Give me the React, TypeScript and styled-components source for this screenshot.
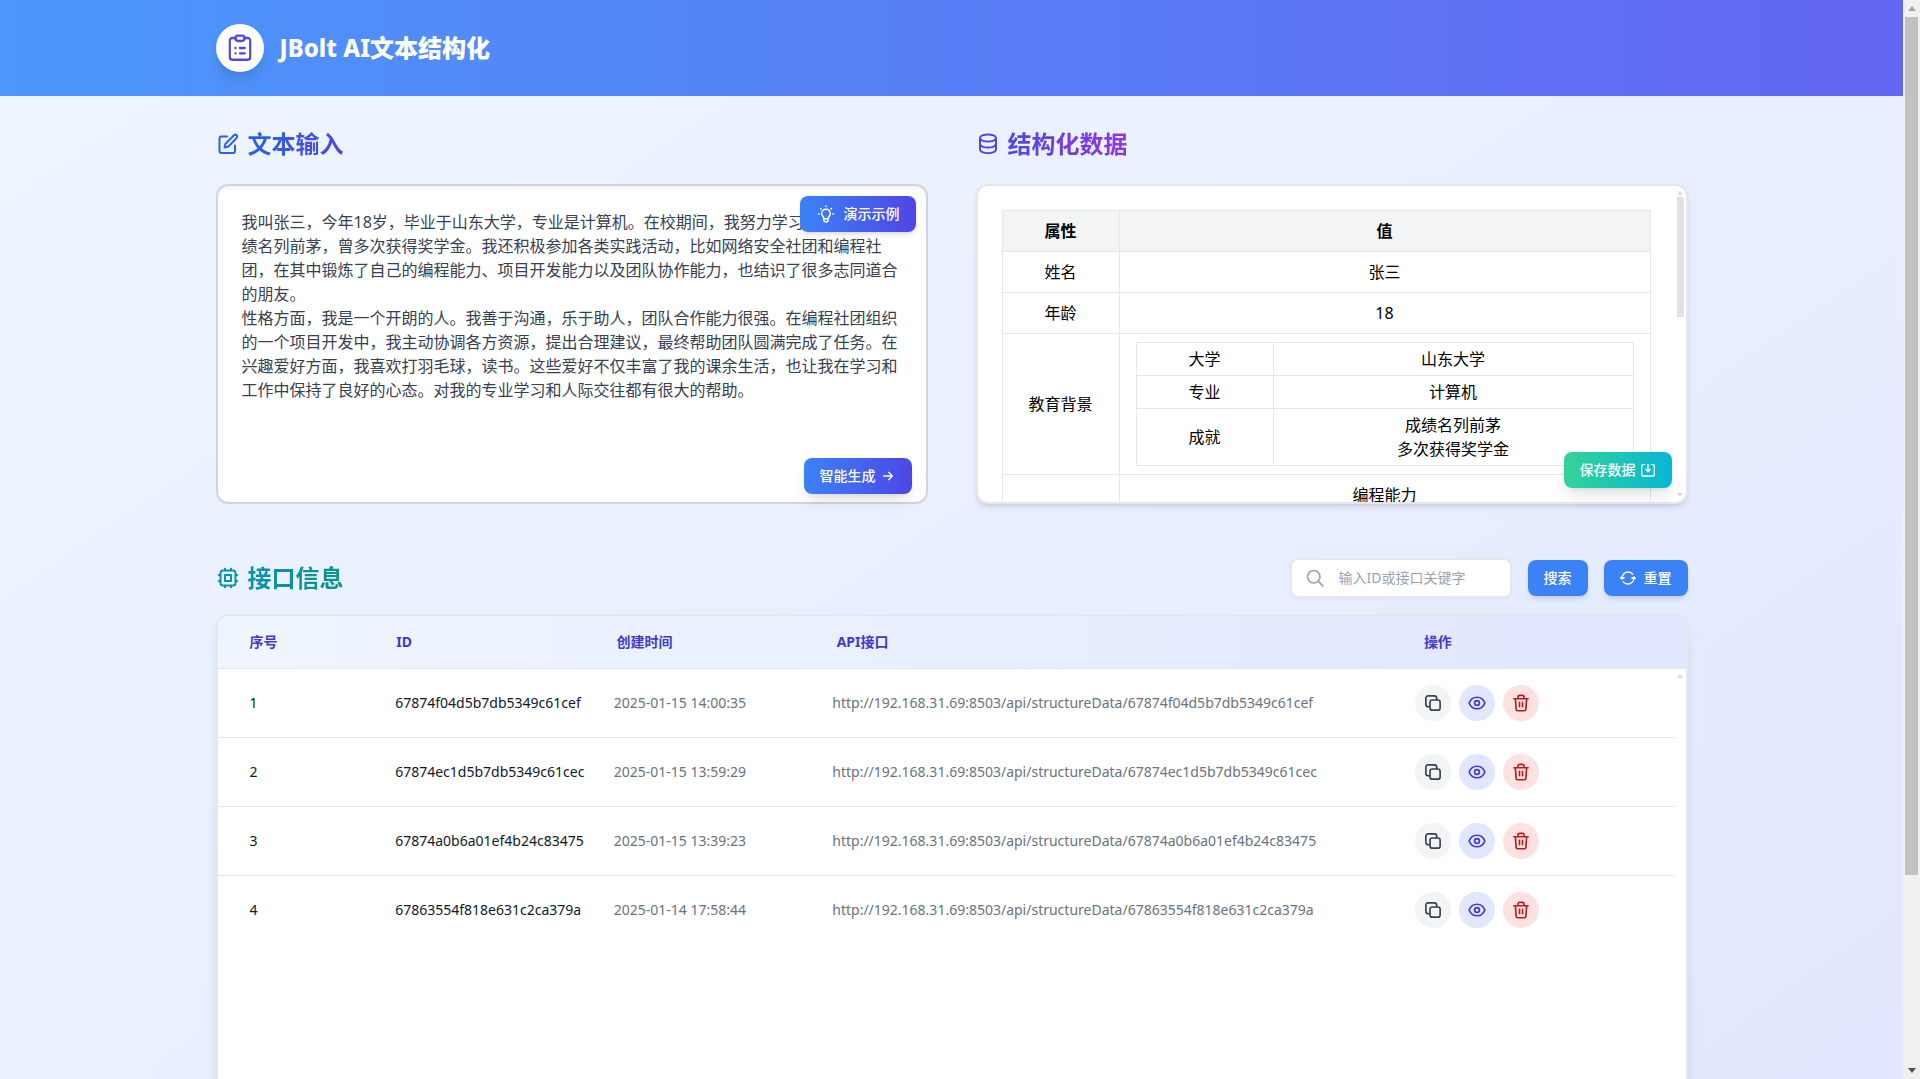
import React, { useState } from "react";
import styled, { createGlobalStyle, css } from "styled-components";

const GlobalStyle = createGlobalStyle`
  *, *::before, *::after { box-sizing: border-box; }
  body {
    margin: 0;
    color: #000;
    font-family: "Noto Sans", "Noto Sans CJK SC", sans-serif;
    font-size: 16px;
    line-height: 24px;
  }
  h1, h2 { margin: 0; }
  button, input, textarea { font: inherit; }
  button { border: 0; cursor: pointer; }
`;

const Shell = styled.div`
  display: flex;
  height: 100vh;
  overflow: hidden;
`;

const Viewport = styled.div`
  flex: 1;
  min-width: 0;
  overflow-y: auto;
  scrollbar-width: none;
`;

const Page = styled.div`
  background: linear-gradient(to bottom right, #eff6ff, #e0e7ff);
`;

const Header = styled.header`
  background: linear-gradient(to right, #4b97fb, #6366f1);
`;

const Container = styled.div`
  max-width: 1536px;
  margin: 0 auto;
  padding: 0 32px;
`;

const Brand = styled(Container)`
  display: flex;
  align-items: center;
  gap: 16px;
  height: 96px;
`;

const Logo = styled.span`
  display: grid;
  place-items: center;
  width: 48px;
  height: 48px;
  border-radius: 50%;
  background: #fff;
  color: #4f46e5;
  box-shadow: 0 10px 15px -3px rgba(0, 0, 0, 0.1), 0 4px 6px -4px rgba(0, 0, 0, 0.1);
`;

const BrandName = styled.h1`
  color: #fff;
  font-size: 24px;
  line-height: 32px;
  font-weight: 800;
`;

const Main = styled(Container).attrs({ as: "main" })`
  display: flex;
  flex-direction: column;
  gap: 54px;
  padding-top: 32px;
  padding-bottom: 48px;
`;

const Columns = styled.div`
  display: grid;
  grid-template-columns: 1fr 1fr;
  gap: 48px;
`;

const Column = styled.section`
  display: flex;
  flex-direction: column;
  gap: 24px;
  min-width: 0;
`;

const Heading = styled.div<{ $tone: string }>`
  display: flex;
  align-items: center;
  gap: 8px;
  height: 32px;
  color: ${(p) => p.$tone};
`;

const HeadingText = styled.h2<{ $from: string; $to: string }>`
  font-size: 24px;
  line-height: 32px;
  font-weight: 700;
  color: transparent;
  background: linear-gradient(to right, ${(p) => p.$from}, ${(p) => p.$to});
  background-clip: text;
  -webkit-background-clip: text;
`;

const Panel = styled.div`
  position: relative;
  height: 320px;
`;

const TextBox = styled.textarea`
  display: block;
  width: 100%;
  height: 100%;
  padding: 24px;
  border: 2px solid #d1d5db;
  border-radius: 12px;
  background: #fff;
  color: #374151;
  resize: none;
  outline: none;
  overflow: hidden;
  scrollbar-width: none;
  line-height: 24px;
  box-shadow: inset 0 2px 4px rgba(0, 0, 0, 0.05);
`;

const solid = css`
  display: inline-flex;
  align-items: center;
  justify-content: center;
  height: 36px;
  padding: 0 16px;
  border-radius: 8px;
  color: #fff;
  font-size: 14px;
  line-height: 20px;
  font-weight: 500;
  white-space: nowrap;
`;

const FloatButton = styled.button<{ $from: string; $to: string }>`
  ${solid}
  position: absolute;
  background: linear-gradient(to right, ${(p) => p.$from}, ${(p) => p.$to});
`;

const ExampleButton = styled(FloatButton)`
  gap: 8px;
  top: 12px;
  right: 12px;
  box-shadow: 0 4px 6px -1px rgba(0, 0, 0, 0.1), 0 2px 4px -2px rgba(0, 0, 0, 0.1);
`;

const ActionButton = styled(FloatButton)<{ $bottom: number }>`
  gap: 4px;
  right: 16px;
  bottom: ${(p) => p.$bottom}px;
  box-shadow: 0 10px 15px -3px rgba(0, 0, 0, 0.1), 0 4px 6px -4px rgba(0, 0, 0, 0.1);
`;

const DataCard = styled.div`
  display: flex;
  height: 100%;
  border: 2px solid #e5e7eb;
  border-radius: 12px;
  background: #fff;
  overflow: hidden;
  box-shadow: 0 4px 6px -1px rgba(0, 0, 0, 0.1), 0 2px 4px -2px rgba(0, 0, 0, 0.1);
`;

const DataScroll = styled.div`
  flex: 1;
  min-width: 0;
  padding: 24px;
  overflow-y: auto;
  scrollbar-width: none;
`;

const Attributes = styled.table`
  width: 100%;
  border-collapse: collapse;
  table-layout: fixed;
  text-align: center;

  th, td { border: 1px solid #e5e7eb; padding: 8px 16px; }
  thead th { background: #f3f4f6; font-weight: 700; }
  tbody th { font-weight: 400; }
`;

const Nested = styled.table`
  width: 100%;
  border-collapse: collapse;
  table-layout: fixed;

  && th, && td { padding: 4px 16px; }
`;

const NameCol = styled.col<{ $w: number }>`
  width: ${(p) => p.$w}px;
`;

const SlimBar = styled.div`
  display: flex;
  flex-direction: column;
  align-items: center;
  width: 11px;
  padding: 5px 2px;
  color: #d9dbe0;
`;

const SlimThumb = styled.div`
  width: 7px;
  height: 120px;
  margin-top: 2px;
  margin-bottom: auto;
  background: #e1e2e6;
`;

const Toolbar = styled.div`
  display: flex;
  align-items: center;
  justify-content: space-between;
  height: 40px;
`;

const SearchForm = styled.form`
  display: flex;
  align-items: center;
  gap: 16px;
`;

const SearchField = styled.label`
  display: flex;
  align-items: center;
  gap: 14px;
  width: 222px;
  height: 40px;
  padding: 0 12px 0 13px;
  border: 2px solid #e5e7eb;
  border-radius: 8px;
  background: #fff;
  color: #9ca3af;
  box-shadow: 0 1px 2px rgba(0, 0, 0, 0.05);
`;

const SearchInput = styled.input`
  flex: 1;
  min-width: 0;
  padding: 0;
  border: 0;
  outline: none;
  background: transparent;
  font-size: 14px;
  line-height: 20px;
  color: #374151;
  &::placeholder { color: #9ca3af; opacity: 1; }
`;

const PlainButton = styled.button`
  ${solid}
  gap: 8px;
  background: #3b82f6;
  box-shadow: 0 4px 6px -1px rgba(0, 0, 0, 0.1), 0 2px 4px -2px rgba(0, 0, 0, 0.1);
`;

const ApiSection = styled.section`
  display: flex;
  flex-direction: column;
  gap: 16px;
`;

const ApiCard = styled.div`
  display: flex;
  flex-direction: column;
  height: 652px;
  border: 2px solid #e5e7eb;
  border-radius: 12px;
  background: #fff;
  overflow: hidden;
  box-shadow: 0 10px 15px -3px rgba(0, 0, 0, 0.1), 0 4px 6px -4px rgba(0, 0, 0, 0.1);
`;

const ApiTable = styled.table`
  width: 100%;
  border-collapse: collapse;
  table-layout: fixed;
  font-size: 14px;
  line-height: 20px;
  text-align: left;
`;

const HeadTable = styled(ApiTable)`
  background: linear-gradient(to right, #eff6ff, #e0e7ff);
  color: #4338ca;

  th { height: 52px; padding: 0 32px; font-weight: 700; border-bottom: 1px solid #e5e7eb; }
`;

const Body = styled.div`
  display: flex;
  flex: 1;
  min-height: 0;
`;

const BodyTable = styled(ApiTable)`
  flex: 1;
  align-self: flex-start;
`;

const Row = styled.tr`
  border-bottom: 1px solid #e5e7eb;
  &:last-child { border-bottom: 0; }
`;

const Cell = styled.td<{ $muted?: boolean }>`
  height: 69px;
  padding: 0 0 0 32px;
  white-space: nowrap;
  color: ${(p) => (p.$muted ? "#6b7280" : "#111827")};
`;

const ShareCol = styled.col<{ $share: number }>`
  width: ${(p) => p.$share}%;
`;

const Actions = styled.div`
  display: flex;
  gap: 8px;
`;

const RoundButton = styled.button<{ $bg: string; $fg: string }>`
  display: grid;
  place-items: center;
  width: 36px;
  height: 36px;
  padding: 0;
  border-radius: 50%;
  background: ${(p) => p.$bg};
  color: ${(p) => p.$fg};
`;

const PageBar = styled.div`
  display: flex;
  flex-direction: column;
  align-items: center;
  justify-content: space-between;
  width: 17px;
  padding: 0 2px;
  background: #f0f0f0;
`;

const PageThumb = styled.div`
  flex: 1;
  width: 13px;
  background: #c1c1c1;
`;

const PageRest = styled.div`
  height: 187px;
`;

const ArrowBox = styled.span<{ $fg: string }>`
  display: grid;
  place-items: center;
  height: 17px;
  color: ${(p) => p.$fg};
`;

type IconProps = { size?: number; width?: number; children: React.ReactNode };

const Icon = ({ size = 20, width = 2, children }: IconProps) => (
  <svg
    width={size}
    height={size}
    viewBox="0 0 24 24"
    fill="none"
    stroke="currentColor"
    strokeWidth={width}
    strokeLinecap="round"
    strokeLinejoin="round"
    aria-hidden="true"
  >
    {children}
  </svg>
);

const ClipboardIcon = () => (
  <Icon size={32} width={1.8}>
    <path d="M8.5 4.500H5.500A2 2 0 0 0 3.500 6.500V18.800a2 2 0 0 0 2 2h13a2 2 0 0 0 2-2V6.500a2 2 0 0 0-2-2h-3" transform="translate(1.2 0) scale(.9 1)" />
    <rect x="8.500" y="2.700" width="7" height="4" rx="2" />
    <path d="M8.600 12h.01M12 12h3.500M8.600 16h.01M12 16h3.500" />
  </Icon>
);

const EditIcon = () => (
  <Icon size={24} width={2}>
    <path d="M11 4.500H5.500a2 2 0 0 0-2 2v12.500a2 2 0 0 0 2 2H17a2 2 0 0 0 2-2V13.500" />
    <path d="M18 3.300a1.800 1.800 0 0 1 2.700 2.600L12.500 14.500 8.500 15.500 9.500 11.800z" />
  </Icon>
);

const DatabaseIcon = () => (
  <Icon size={24} width={2}>
    <ellipse cx="12" cy="6" rx="8" ry="3.600" />
    <path d="M4 6v11.600c0 2 3.600 3.600 8 3.600s8-1.600 8-3.600V6" />
    <path d="M4 12c0 2 3.600 3.600 8 3.600s8-1.600 8-3.600" />
  </Icon>
);

const ChipIcon = () => (
  <Icon size={24} width={2}>
    <rect x="4.500" y="4.500" width="15" height="15" rx="2.500" />
    <rect x="9" y="9" width="6" height="6" />
    <path d="M9 2.800v1.500M15 2.800v1.500M9 19.700v1.500M15 19.700v1.500M2.800 9h1.500M2.800 15h1.500M19.700 9h1.500M19.700 15h1.500" />
  </Icon>
);

const BulbIcon = () => (
  <Icon size={20} width={1.8}>
    <path d="M9.500 17.500c0-2.200-2.700-3-2.700-6a5.200 5.200 0 0 1 10.400 0c0 3-2.700 3.800-2.700 6v2.300a1.500 1.500 0 0 1-1.500 1.500h-2a1.500 1.500 0 0 1-1.500-1.500zM9.500 17.800h5" />
    <path d="M12 2.500v.5M3 12h.8M20.200 12h.8M5.500 5.500l.5.5M18.500 5.500l-.5.500" />
  </Icon>
);

const ArrowIcon = () => (
  <Icon size={16} width={2}>
    <path d="M5.500 12h13M13 6.500l5.500 5.500-5.500 5.500" />
  </Icon>
);

const SaveIcon = () => (
  <Icon size={16} width={2}>
    <path d="M7 4H4.500a2 2 0 0 0-2 2v13a2 2 0 0 0 2 2h15a2 2 0 0 0 2-2V6a2 2 0 0 0-2-2H17" />
    <path d="M12 3.500v10M8.500 11l3.500 3.500 3.500-3.500" />
  </Icon>
);

const SearchIcon = () => (
  <Icon size={20} width={2}>
    <circle cx="10.500" cy="10.500" r="7.500" />
    <path d="M16 16l5.500 5.500" />
  </Icon>
);

const RefreshIcon = () => (
  <Icon size={16} width={2}>
    <path d="M3 13C2.500 7.500 7 3 12 3c3 0 5.500 1.200 7 3.300M21 11c.5 5.500-4 10-9 10-3 0-5.500-1.200-7-3.300" />
    <path d="M1 11.200L3 13.500l3.200-1.700z M23 12.800L21 10.500l-3.200 1.700z" fill="currentColor" />
  </Icon>
);

const CopyIcon = () => (
  <Icon size={18} width={2.2}>
    <rect x="8" y="8" width="13.500" height="13.500" rx="3" />
    <path d="M7.800 17H6a3.500 3.500 0 0 1-3.500-3.500V5.500a3 3 0 0 1 3-3h8A3.500 3.500 0 0 1 17 6v1.800" />
  </Icon>
);

const EyeIcon = () => (
  <Icon size={18} width={2.2}>
    <path d="M1.500 12C3.500 7 7.500 4.300 12 4.300S20.500 7 22.500 12C20.500 17 16.500 19.700 12 19.700S3.500 17 1.500 12z" />
    <circle cx="12" cy="12" r="3.200" />
  </Icon>
);

const TrashIcon = () => (
  <Icon size={18} width={2.2}>
    <path d="M2.500 6.300h19M8 6V3.800a2 2 0 0 1 2-2h4a2 2 0 0 1 2 2V6M4.500 6.500l1 14a2 2 0 0 0 2 1.800h9a2 2 0 0 0 2-1.800l1-14M10 11v6M14 11v6" />
  </Icon>
);

const Caret = ({ w, down }: { w: number; down?: boolean }) => (
  <svg width={w} height={w / 2 + 1} viewBox="0 0 8 4" preserveAspectRatio="none" aria-hidden="true">
    <path d={down ? "M0 0h8L4 4z" : "M0 4h8L4 0z"} fill="currentColor" />
  </svg>
);

const SAMPLE =
  "我叫张三，今年18岁，毕业于山东大学，专业是计算机。在校期间，我努力学习，各门学科成绩名列前茅，曾多次获得奖学金。我还积极参加各类实践活动，比如网络安全社团和编程社团，在其中锻炼了自己的编程能力、项目开发能力以及团队协作能力，也结识了很多志同道合的朋友。\n性格方面，我是一个开朗的人。我善于沟通，乐于助人，团队合作能力很强。在编程社团组织的一个项目开发中，我主动协调各方资源，提出合理建议，最终帮助团队圆满完成了任务。在兴趣爱好方面，我喜欢打羽毛球，读书。这些爱好不仅丰富了我的课余生活，也让我在学习和工作中保持了良好的心态。对我的专业学习和人际交往都有很大的帮助。";

const RECORDS = [
  { id: "67874f04d5b7db5349c61cef", time: "2025-01-15 14:00:35" },
  { id: "67874ec1d5b7db5349c61cec", time: "2025-01-15 13:59:29" },
  { id: "67874a0b6a01ef4b24c83475", time: "2025-01-15 13:39:23" },
  { id: "67863554f818e631c2ca379a", time: "2025-01-14 17:58:44" },
];

const API_BASE = "http://192.168.31.69:8503/api/structureData/";

const ApiCols = () => (
  <colgroup>
    {[10, 15, 15, 40, 20].map((share, i) => (
      <ShareCol key={i} $share={share} />
    ))}
  </colgroup>
);

export default function App() {
  const [text, setText] = useState(SAMPLE);
  const [query, setQuery] = useState("");

  return (
    <>
      <GlobalStyle />
      <Shell>
        <Viewport>
          <Page>
            <Header>
              <Brand>
                <Logo><ClipboardIcon /></Logo>
                <BrandName>JBolt AI文本结构化</BrandName>
              </Brand>
            </Header>
            <Main>
              <Columns>
                <Column>
                  <Heading $tone="#2563eb">
                    <EditIcon />
                    <HeadingText $from="#2563eb" $to="#4f46e5">文本输入</HeadingText>
                  </Heading>
                  <Panel>
                    <TextBox
                      aria-label="文本输入"
                      spellCheck={false}
                      value={text}
                      onChange={(e) => setText(e.target.value)}
                    />
                    <ExampleButton $from="#3b82f6" $to="#4f46e5" type="button" onClick={() => setText(SAMPLE)}>
                      <BulbIcon />演示示例
                    </ExampleButton>
                    <ActionButton $bottom={10} $from="#3b82f6" $to="#4f46e5" type="button">
                      智能生成<ArrowIcon />
                    </ActionButton>
                  </Panel>
                </Column>
                <Column>
                  <Heading $tone="#4f46e5">
                    <DatabaseIcon />
                    <HeadingText $from="#4f46e5" $to="#9333ea">结构化数据</HeadingText>
                  </Heading>
                  <Panel>
                    <DataCard>
                      <DataScroll>
                        <Attributes>
                          <colgroup><NameCol $w={117} /><col /></colgroup>
                          <thead>
                            <tr><th scope="col">属性</th><th scope="col">值</th></tr>
                          </thead>
                          <tbody>
                            <tr><th scope="row">姓名</th><td>张三</td></tr>
                            <tr><th scope="row">年龄</th><td>18</td></tr>
                            <tr>
                              <th scope="row">教育背景</th>
                              <td>
                                <Nested>
                                  <colgroup><NameCol $w={137} /><col /></colgroup>
                                  <tbody>
                                    <tr><th scope="row">大学</th><td>山东大学</td></tr>
                                    <tr><th scope="row">专业</th><td>计算机</td></tr>
                                    <tr><th scope="row">成就</th><td>成绩名列前茅<br />多次获得奖学金</td></tr>
                                  </tbody>
                                </Nested>
                              </td>
                            </tr>
                            <tr>
                              <th scope="row">能力</th>
                              <td>编程能力<br />项目开发能力<br />团队协作能力</td>
                            </tr>
                          </tbody>
                        </Attributes>
                      </DataScroll>
                      <SlimBar>
                        <Caret w={6} />
                        <SlimThumb />
                        <Caret w={6} down />
                      </SlimBar>
                    </DataCard>
                    <ActionButton $bottom={16} $from="#34d399" $to="#06b6d4" type="button">
                      保存数据<SaveIcon />
                    </ActionButton>
                  </Panel>
                </Column>
              </Columns>

              <ApiSection>
                <Toolbar>
                  <Heading $tone="#0891b2">
                    <ChipIcon />
                    <HeadingText $from="#0891b2" $to="#0d9488">接口信息</HeadingText>
                  </Heading>
                  <SearchForm onSubmit={(e) => e.preventDefault()}>
                    <SearchField>
                      <SearchIcon />
                      <SearchInput
                        aria-label="搜索接口"
                        placeholder="输入ID或接口关键字"
                        value={query}
                        onChange={(e) => setQuery(e.target.value)}
                      />
                    </SearchField>
                    <PlainButton type="submit">搜索</PlainButton>
                    <PlainButton type="button" onClick={() => setQuery("")}>
                      <RefreshIcon />重置
                    </PlainButton>
                  </SearchForm>
                </Toolbar>
                <ApiCard>
                  <HeadTable>
                    <ApiCols />
                    <thead>
                      <tr>
                        <th scope="col">序号</th>
                        <th scope="col">ID</th>
                        <th scope="col">创建时间</th>
                        <th scope="col">API接口</th>
                        <th scope="col">操作</th>
                      </tr>
                    </thead>
                  </HeadTable>
                  <Body>
                    <BodyTable>
                      <ApiCols />
                      <tbody>
                        {RECORDS.map((r, i) => (
                          <Row key={r.id}>
                            <Cell>{i + 1}</Cell>
                            <Cell>{r.id}</Cell>
                            <Cell $muted>{r.time}</Cell>
                            <Cell $muted>{API_BASE + r.id}</Cell>
                            <Cell>
                              <Actions>
                                <RoundButton type="button" aria-label="复制" $bg="#f3f4f6" $fg="#374151"><CopyIcon /></RoundButton>
                                <RoundButton type="button" aria-label="查看" $bg="#e0e7ff" $fg="#4338ca"><EyeIcon /></RoundButton>
                                <RoundButton type="button" aria-label="删除" $bg="#fee2e2" $fg="#b91c1c"><TrashIcon /></RoundButton>
                              </Actions>
                            </Cell>
                          </Row>
                        ))}
                      </tbody>
                    </BodyTable>
                    <SlimBar><Caret w={6} /></SlimBar>
                  </Body>
                </ApiCard>
              </ApiSection>
            </Main>
          </Page>
        </Viewport>
        <PageBar aria-hidden="true">
          <ArrowBox $fg="#a3a3a3"><Caret w={8} /></ArrowBox>
          <PageThumb />
          <PageRest />
          <ArrowBox $fg="#505050"><Caret w={8} down /></ArrowBox>
        </PageBar>
      </Shell>
    </>
  );
}
